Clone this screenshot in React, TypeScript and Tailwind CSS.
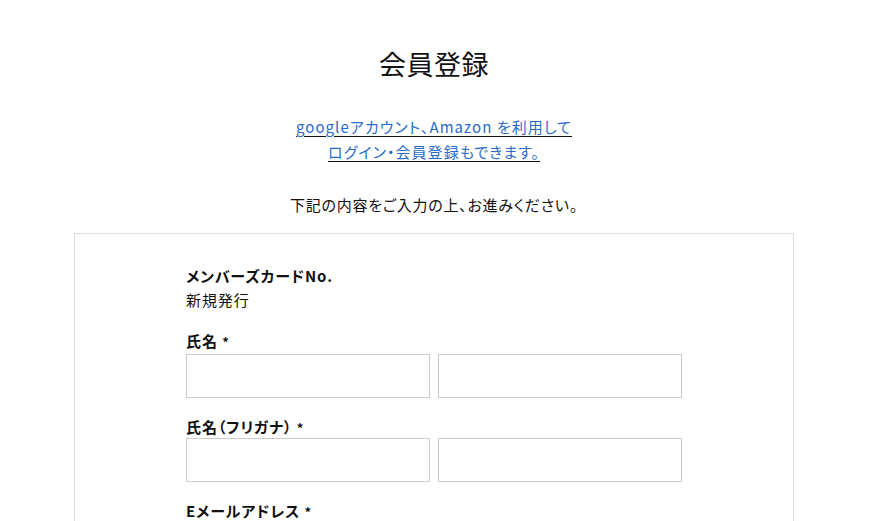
export default function App() {
  const font = { fontFamily: '"Noto Sans CJK JP", "Noto Sans", sans-serif' };

  const NameRow = ({ label, gap }: { label: string; gap: string }) => (
    <div className="mb-[19px]">
      <div className={`text-[15px] font-bold leading-[20px] tracking-[0.06em] ${gap}`}>
        {label} <span className="text-[13px]">*</span>
      </div>
      <div className="flex gap-[8px]">
        <input className="w-[244px] h-[44px] border border-[#cccccc] bg-white" />
        <input className="w-[244px] h-[44px] border border-[#cccccc] bg-white" />
      </div>
    </div>
  );

  return (
    <div
      className="min-h-screen bg-white text-[#111] pr-[4px] [font-feature-settings:'palt']"
      style={font}
    >
      <div className="w-[720px] mx-auto">
        <h1 className="pt-[44px] text-center text-[27px] leading-[40px] tracking-[0.02em]">会員登録</h1>

        <div className="mt-[30px] text-center text-[15px] leading-[25px] tracking-[0.07em]">
          <a
            href="#"
            className="text-[#2a6bc8] underline decoration-[#111] underline-offset-[3px]"
          >
            googleアカウント、Amazon を利用して
            <br />
            ログイン・会員登録もできます。
          </a>
        </div>

        <p className="mt-[29px] text-center text-[15px] leading-[24px] tracking-[0.05em]">
          下記の内容をご入力の上、お進みください。
        </p>

        <div className="mt-[16px] border border-[#dddddd] h-[400px]">
          <div className="w-[496px] mx-auto pt-[32px]">
            <div className="text-[15px] font-bold leading-[20px] tracking-[0.06em]">メンバーズカードNo.</div>
            <div className="mt-[4px] text-[15px] leading-[20px] tracking-[0.06em]">新規発行</div>
            <div className="mt-[21px]">
              <NameRow label="氏名" gap="mb-[2px]" />
              <NameRow label="氏名（フリガナ）" gap="mb-0" />
              <div className="text-[15px] font-bold leading-[20px] tracking-[0.06em]">
                Eメールアドレス <span className="text-[13px]">*</span>
              </div>
            </div>
          </div>
        </div>
      </div>
    </div>
  );
}
